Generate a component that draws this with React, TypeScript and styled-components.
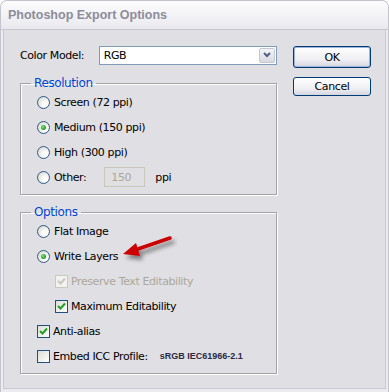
import React from 'react';
import styled, { createGlobalStyle } from 'styled-components';

const GlobalStyle = createGlobalStyle`
  html, body {
    margin: 0;
    padding: 0;
    background: #ffffff;
  }
  body {
    font-family: "DejaVu Sans", "Liberation Sans", sans-serif;
    font-size: 11px;
    letter-spacing: -0.4px;
    color: #000;
  }
`;

const Window = styled.div`
  position: relative;
  width: 389px;
  height: 392px;
  box-sizing: border-box;
  display: flex;
  flex-direction: column;
  border: 1px solid #c4c4cc;
  border-bottom: none;
  border-radius: 7px 7px 0 0;
  overflow: hidden;
  background: #e0dfe3;
`;

const TitleBar = styled.div`
  height: 28px;
  flex-shrink: 0;
  display: flex;
  align-items: center;
  padding-left: 7px;
  background: linear-gradient(#fdfdfe, #f1f1f5 60%, #e8e8ee);
  border-bottom: 1px solid #c6c6ce;
  font-family: "Liberation Sans", Arial, sans-serif;
  font-weight: bold;
  font-size: 12.5px;
  letter-spacing: 0;
  color: #8c8c99;
`;

const Body = styled.div`
  flex: 1;
  display: flex;
  gap: 16px;
  padding: 15px 0 0 16px;
  border-left: 2px solid #ececf0;
  border-right: 2px solid #ececf0;
  border-bottom: 3px solid #ececf0;
  box-shadow: inset 1px 0 0 #c8c8d0, inset -1px 0 0 #c8c8d0, inset 0 -1px 0 #c8c8d0;
`;

const LeftCol = styled.div`
  width: 258px;
  display: flex;
  flex-direction: column;
`;

const RightCol = styled.div`
  width: 78px;
  display: flex;
  flex-direction: column;
  gap: 9px;
  padding-top: 1px;
`;

const ModelRow = styled.div`
  height: 20px;
  display: flex;
  align-items: center;
  margin-left: 1px;
`;

const Label = styled.span`
  width: 79px;
`;

const Select = styled.div`
  width: 179px;
  height: 19px;
  box-sizing: border-box;
  display: flex;
  align-items: center;
  border: 1px solid #7f9db9;
  background: #fff;
  padding: 1px;
`;

const SelectValue = styled.span`
  flex: 1;
  padding-left: 3px;
`;

const SelectArrow = styled.span`
  width: 16px;
  height: 15px;
  box-sizing: border-box;
  display: flex;
  align-items: center;
  justify-content: center;
  border: 1px solid #c3c7d3;
  border-radius: 2px;
  background: linear-gradient(#f4f4f6, #d8d9e0);
`;

const Group = styled.fieldset<{ $top: number }>`
  margin: 0;
  padding: 1px 0 6px 16px;
  border: 1px solid #a3a3a8;
  box-shadow: 1px 1px 0 #fff, inset 1px 1px 0 #fff;
  display: flex;
  flex-direction: column;
  gap: 3px;
  margin-left: 1px;
  margin-top: ${(p) => p.$top}px;
`;

const Legend = styled.legend`
  color: #0046d5;
  font-size: 12px;
  line-height: 14px;
  padding: 0 3px;
  margin-left: -6px;
`;

const Row = styled.div<{ $indent?: number; $disabled?: boolean }>`
  height: 22px;
  display: flex;
  align-items: center;
  gap: 4px;
  margin-left: ${(p) => p.$indent ?? 0}px;
  color: ${(p) => (p.$disabled ? '#aca899' : '#000')};
  font-size: 11px;
`;

const Radio = styled.span<{ $on?: boolean }>`
  position: relative;
  width: 13px;
  height: 13px;
  box-sizing: border-box;
  border-radius: 50%;
  border: 1px solid #2f5a85;
  background: radial-gradient(circle at 65% 65%, #ffffff 20%, #e6e6e0 60%, #d0d0c8);
  flex-shrink: 0;
  &::after {
    content: '';
    display: ${(p) => (p.$on ? 'block' : 'none')};
    position: absolute;
    left: 3px;
    top: 3px;
    width: 5px;
    height: 5px;
    border-radius: 50%;
    background: radial-gradient(circle at 40% 40%, #8ae08a, #21a121 60%, #1a8a1a);
  }
`;

const Check = styled.span<{ $disabled?: boolean }>`
  width: 13px;
  height: 13px;
  box-sizing: border-box;
  border: 1px solid ${(p) => (p.$disabled ? '#cac8bb' : '#1c5180')};
  background: ${(p) =>
    p.$disabled ? '#f2f2f0' : 'linear-gradient(135deg, #dcdcd7, #ffffff)'};
  display: flex;
  align-items: center;
  justify-content: center;
  flex-shrink: 0;
  margin-right: -1px;
`;

const NumInput = styled.span`
  width: 41px;
  height: 20px;
  box-sizing: border-box;
  border: 1px solid #c9c7ba;
  color: #aca899;
  display: flex;
  align-items: center;
  padding-left: 6px;
  margin-left: 14px;
  margin-right: 6px;
`;

const Profile = styled.span`
  margin-left: 8px;
  font-family: "Liberation Sans", Arial, sans-serif;
  font-size: 9px;
  font-weight: bold;
  letter-spacing: 0;
  color: #2a2a48;
`;

const Button = styled.button<{ $default?: boolean }>`
  width: 78px;
  height: ${(p) => (p.$default ? 22 : 19)}px;
  box-sizing: border-box;
  border: 1px solid #003c74;
  border-radius: 3px;
  background: linear-gradient(#ffffff, #f0f0f4 60%, #d6d6e2);
  box-shadow: ${(p) => (p.$default ? 'inset 0 0 0 1px #9fb4dc' : 'none')};
  font-family: "DejaVu Sans", sans-serif;
  font-size: 11px;
  letter-spacing: -0.4px;
  color: #000;
  padding: 0;
`;

const Arrow = styled.svg`
  position: absolute;
  left: 114px;
  top: 229px;
`;

function CheckMark({ color }: { color: string }) {
  return (
    <svg width="9" height="9" viewBox="0 0 9 9">
      <path d="M1 4 L3.5 6.5 L8 1.5" fill="none" stroke={color} strokeWidth="2" />
    </svg>
  );
}

export default function App() {
  return (
    <>
      <GlobalStyle />
      <Window>
        <TitleBar>Photoshop Export Options</TitleBar>
        <Body>
          <LeftCol>
            <ModelRow>
              <Label>Color Model:</Label>
              <Select>
                <SelectValue>RGB</SelectValue>
                <SelectArrow>
                  <svg width="8" height="6" viewBox="0 0 8 6">
                    <path d="M1 1 L4 4 L7 1" fill="none" stroke="#4d6185" strokeWidth="2" />
                  </svg>
                </SelectArrow>
              </Select>
            </ModelRow>

            <Group $top={11}>
              <Legend>Resolution</Legend>
              <Row>
                <Radio />
                Screen (72 ppi)
              </Row>
              <Row>
                <Radio $on />
                Medium (150 ppi)
              </Row>
              <Row>
                <Radio />
                High (300 ppi)
              </Row>
              <Row>
                <Radio />
                Other:
                <NumInput>150</NumInput>
                ppi
              </Row>
            </Group>

            <Group $top={10}>
              <Legend>Options</Legend>
              <Row>
                <Radio />
                Flat Image
              </Row>
              <Row>
                <Radio $on />
                Write Layers
              </Row>
              <Row $indent={18} $disabled>
                <Check $disabled>
                  <CheckMark color="#cac8bb" />
                </Check>
                Preserve Text Editability
              </Row>
              <Row $indent={18}>
                <Check>
                  <CheckMark color="#21a121" />
                </Check>
                Maximum Editability
              </Row>
              <Row>
                <Check>
                  <CheckMark color="#21a121" />
                </Check>
                Anti-alias
              </Row>
              <Row>
                <Check />
                Embed ICC Profile:
                <Profile>sRGB IEC61966-2.1</Profile>
              </Row>
            </Group>
          </LeftCol>

          <RightCol>
            <Button $default>OK</Button>
            <Button>Cancel</Button>
          </RightCol>
        </Body>

        <Arrow width="64" height="36" viewBox="0 0 64 36">
          <defs>
            <filter id="sh" x="-20%" y="-40%" width="150%" height="200%">
              <feDropShadow dx="3" dy="4" stdDeviation="2" floodColor="#000" floodOpacity="0.45" />
            </filter>
          </defs>
          <g filter="url(#sh)">
            <line x1="55" y1="8" x2="20" y2="20" stroke="#cc0000" strokeWidth="3.5" strokeLinecap="round" />
            <polygon points="8,24 21,13 25,26" fill="#cc0000" />
          </g>
        </Arrow>
      </Window>
    </>
  );
}
